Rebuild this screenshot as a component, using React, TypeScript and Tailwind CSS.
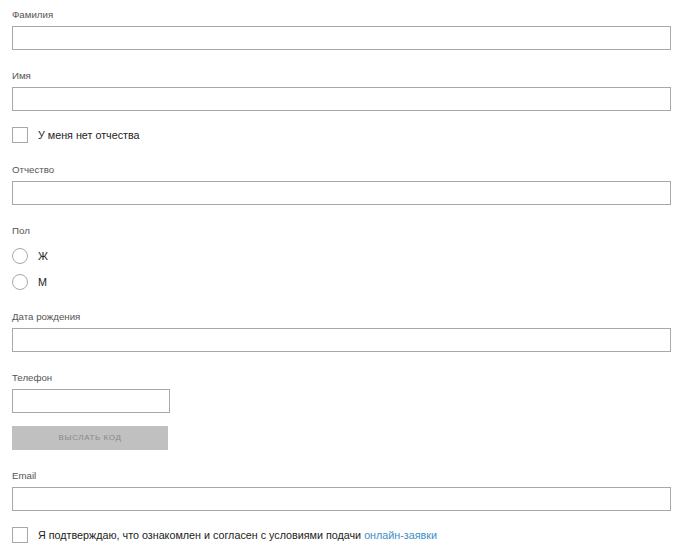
import React from "react";

const font = { fontFamily: '"Liberation Sans", Arial, sans-serif' };

function Label({ children, className = "" }: { children: React.ReactNode; className?: string }) {
  return <div className={`h-4 text-[9.7px] leading-[18px] text-[#555] ${className}`}>{children}</div>;
}

function Input({ className = "w-[659px]" }: { className?: string }) {
  return <div className={`mt-1 h-6 border border-[#a8a8a8] bg-white ${className}`} />;
}

function Check({ children, className = "" }: { children: React.ReactNode; className?: string }) {
  return (
    <div className={`flex h-4 items-center ${className}`}>
      <div className="h-4 w-4 border border-[#a8a8a8] bg-white" />
      <div className="ml-[10px] text-[10.75px] leading-4 text-[#222]">{children}</div>
    </div>
  );
}

function Radio({ children, className = "" }: { children: React.ReactNode; className?: string }) {
  return (
    <div className={`flex h-4 items-center ${className}`}>
      <div className="h-4 w-4 rounded-full border border-[#a8a8a8] bg-white" />
      <div className="ml-[10px] text-[10.75px] leading-4 text-[#222]">{children}</div>
    </div>
  );
}

export default function App() {
  return (
    <div className="min-h-[554px] w-[696px] bg-white px-3 pt-[6px]" style={font}>
      <Label>Фамилия</Label>
      <Input />
      <Label className="mt-[17px]">Имя</Label>
      <Input />
      <Check className="mt-4">У меня нет отчества</Check>
      <Label className="mt-[18px]">Отчество</Label>
      <Input />
      <Label className="mt-[17px]">Пол</Label>
      <Radio className="mt-[10px]">Ж</Radio>
      <Radio className="mt-[10px]">М</Radio>
      <Label className="mt-[18px]">Дата рождения</Label>
      <Input />
      <Label className="mt-[17px]">Телефон</Label>
      <Input className="w-[158px]" />
      <button className="mt-[13px] flex h-6 w-[156px] items-center justify-center bg-[#c0c0c0] text-[8px] tracking-[0.6px] text-[#8a8a8a]">
        ВЫСЛАТЬ КОД
      </button>
      <Label className="mt-[17px]">Email</Label>
      <Input />
      <Check className="mt-4">
        Я подтверждаю, что ознакомлен и согласен с условиями подачи{" "}
        <span className="text-[#3a8fc4]">онлайн-заявки</span>
      </Check>
    </div>
  );
}
